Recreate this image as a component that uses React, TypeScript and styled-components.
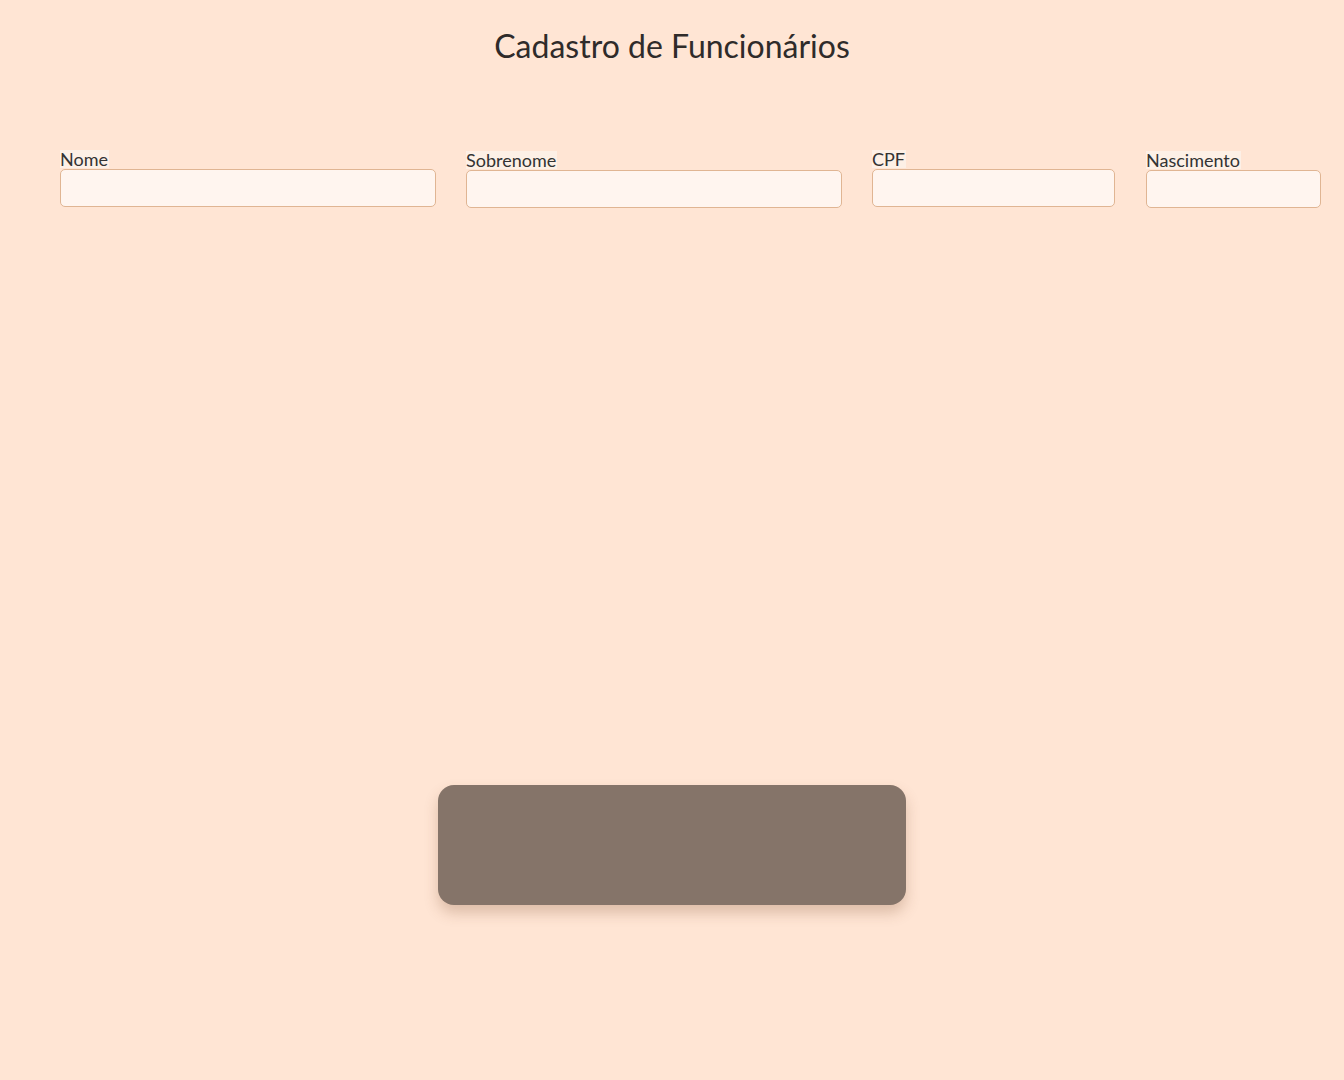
import React from "react";
import styled, { createGlobalStyle } from "styled-components";

const Global = createGlobalStyle`
  html, body { margin: 0; padding: 0; background: #ffe5d4; }
  body { font-family: "Lato", "Open Sans", sans-serif; color: #333; }
  * { box-sizing: border-box; }
`;

const Page = styled.main`
  min-height: 1080px;
  display: flex;
  flex-direction: column;
  align-items: stretch;
`;

const Title = styled.h1`
  margin: 23px 0 0;
  text-align: center;
  font-family: "Lato", sans-serif;
  font-weight: 400;
  font-size: 32px;
  line-height: 45px;
  color: #2f2b2a;
`;

const FieldRow = styled.div`
  display: flex;
  gap: 30px;
  padding: 82px 0 0 60px;
  align-items: flex-end;
`;

const Field = styled.div<{ $w: number; $offset?: number; $shift?: number }>`
  width: ${(p) => p.$w}px;
  margin-left: ${(p) => p.$shift ?? 0}px;
  display: flex;
  flex-direction: column;
  align-items: flex-start;
  transform: translateY(${(p) => p.$offset ?? 0}px);
`;

const Label = styled.label`
  font-family: "Lato", sans-serif;
  font-size: 18px;
  line-height: 18px;
  color: #333;
  background: #fdf0e6;
  padding-right: 1px;
`;

const Input = styled.input`
  width: 100%;
  height: 38px;
  margin-top: 1px;
  background: #fff5ef;
  border: 1px solid #e0b593;
  border-radius: 5px;
  outline: none;
`;

const ButtonWrap = styled.div`
  display: flex;
  justify-content: center;
  margin-top: 578px;
`;

const Submit = styled.button`
  width: 468px;
  height: 120px;
  border: none;
  border-radius: 16px;
  background: #857469;
  box-shadow: 0 8px 14px rgba(120, 70, 40, 0.25);
  cursor: pointer;
`;

const fields = [
  { label: "Nome", w: 376, off: 0, shift: 0 },
  { label: "Sobrenome", w: 376, off: 1, shift: 0 },
  { label: "CPF", w: 243, off: 0, shift: 0 },
  { label: "Nascimento", w: 175, off: 1, shift: 1 },
];

export default function App() {
  return (
    <>
      <Global />
      <Page>
        <Title>Cadastro de Funcionários</Title>
        <FieldRow>
          {fields.map((f) => (
            <Field key={f.label} $w={f.w} $offset={f.off} $shift={f.shift}>
              <Label>{f.label}</Label>
              <Input type="text" />
            </Field>
          ))}
        </FieldRow>
        <ButtonWrap>
          <Submit type="button" />
        </ButtonWrap>
      </Page>
    </>
  );
}
